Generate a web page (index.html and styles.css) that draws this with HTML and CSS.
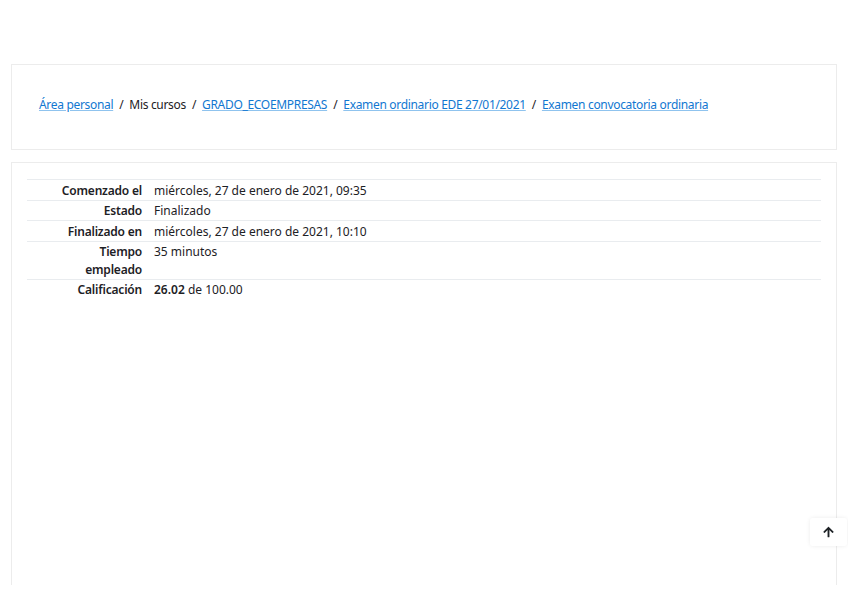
FILE: index.html
```html
<!DOCTYPE html>
<html lang="es">
<head>
  <meta charset="UTF-8">
  <meta name="viewport" content="width=device-width, initial-scale=1.0">
  <title>Examen convocatoria ordinaria: Revisión del intento</title>
  <link rel="stylesheet" href="styles.css">
</head>
<body>
  <div class="page">
    <div class="card header-card">
      <nav class="breadcrumb">
        <a href="#">Área personal</a>
        <span class="sep">/</span>
        <span>Mis cursos</span>
        <span class="sep">/</span>
        <a href="#">GRADO_ECOEMPRESAS</a>
        <span class="sep">/</span>
        <a href="#">Examen ordinario EDE 27/01/2021</a>
        <span class="sep">/</span>
        <a href="#">Examen convocatoria ordinaria</a>
      </nav>
    </div>

    <div class="card main-card">
      <table class="summary">
        <tbody>
          <tr><th>Comenzado el</th><td>miércoles, 27 de enero de 2021, 09:35</td></tr>
          <tr><th>Estado</th><td>Finalizado</td></tr>
          <tr><th>Finalizado en</th><td>miércoles, 27 de enero de 2021, 10:10</td></tr>
          <tr><th>Tiempo empleado</th><td>35 minutos</td></tr>
          <tr><th>Calificación</th><td><b>26.02</b> de 100.00</td></tr>
        </tbody>
      </table>
    </div>
  </div>

  <a class="back-to-top" href="#">
    <svg width="11" height="12" viewBox="0 0 448 512"><path fill="#1d2125" d="M34.9 289.5l-22.2-22.2c-9.4-9.4-9.4-24.6 0-33.9L207 39c9.4-9.4 24.6-9.4 33.9 0l194.3 194.3c9.4 9.4 9.4 24.6 0 33.9L413 289.4c-9.5 9.5-25 9.3-34.3-.4L264 168.6V456c0 13.3-10.7 24-24 24h-32c-13.3 0-24-10.7-24-24V168.6L69.2 289.1c-9.3 9.8-24.8 10-34.3.4z"/></svg>
  </a>
</body>
</html>
```

FILE: styles.css
```css
* {
  box-sizing: border-box;
}
body {
  margin: 0;
  font-family: "Noto Sans", "Open Sans", sans-serif;
  font-size: 12px;
  color: #1d2125;
  background: #fff;
}
.page {
  height: 585px;
  overflow: hidden;
  padding: 64px 11px 0;
}
.card {
  border: 1px solid #ececec;
  background: #fff;
}
.header-card {
  height: 86px;
  display: flex;
  align-items: center;
  padding: 0 27px 6px;
}
.breadcrumb {
  display: flex;
  gap: 6px;
  white-space: nowrap;
  letter-spacing: -0.32px;
}
.breadcrumb a {
  color: #1177d1;
  text-decoration: underline;
  text-decoration-color: #8fc3ee;
}
.main-card {
  margin-top: 12px;
  height: 600px;
  padding: 16px 15px;
}
.summary {
  width: 100%;
  border-collapse: collapse;
}
.summary tr {
  border-top: 1px solid #e9ecef;
}
.summary th {
  width: 121px;
  text-align: right;
  font-weight: 600;
  padding: 1.5px 6px 0.5px 15px;
  line-height: 17.5px;
  vertical-align: top;
  letter-spacing: -0.2px;
}
.summary td {
  padding: 1.5px 6px 0.5px;
  line-height: 17.5px;
  vertical-align: top;
}
.summary b {
  font-weight: 600;
}
.back-to-top {
  position: fixed;
  right: 1px;
  bottom: 53px;
  width: 37px;
  height: 28px;
  display: flex;
  align-items: center;
  justify-content: center;
  background: #fff;
  border-radius: 3px;
  box-shadow: 0 0 4px rgba(0, 0, 0, 0.08);
}
```
